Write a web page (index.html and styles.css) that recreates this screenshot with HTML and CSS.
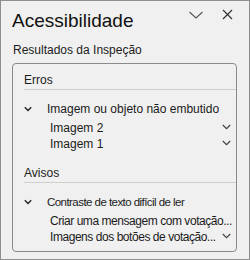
FILE: index.html
```html
<!DOCTYPE html>
<html lang="pt">
<head>
<meta charset="utf-8">
<link rel="stylesheet" href="styles.css">
</head>
<body>
<div class="pane">
  <div class="header">
    <h1 class="title">Acessibilidade</h1>
    <div class="actions">
      <svg class="icon" width="16" height="8" viewBox="0 0 16 8"><path d="M1.5 1 L8 7 L14.5 1" fill="none" stroke="#555" stroke-width="1.1"/></svg>
      <svg class="icon" width="11" height="11" viewBox="0 0 11 11"><path d="M1 1 L10 10 M10 1 L1 10" fill="none" stroke="#333" stroke-width="1.2"/></svg>
    </div>
  </div>
  <div class="subtitle">Resultados da Inspeção</div>
  <div class="box">
    <div class="section">Erros</div>
    <div class="issue">
      <svg class="chev" width="8" height="6" viewBox="0 0 8 6"><path d="M0.8 1.2 L4 4.4 L7.2 1.2" fill="none" stroke="#222" stroke-width="1.4"/></svg>
      <span>Imagem ou objeto não embutido</span>
    </div>
    <div class="item"><span>Imagem 2</span><svg class="chev-r" width="9" height="6" viewBox="0 0 9 6"><path d="M0.8 1 L4.5 4.6 L8.2 1" fill="none" stroke="#444" stroke-width="1.2"/></svg></div>
    <div class="item"><span>Imagem 1</span><svg class="chev-r" width="9" height="6" viewBox="0 0 9 6"><path d="M0.8 1 L4.5 4.6 L8.2 1" fill="none" stroke="#444" stroke-width="1.2"/></svg></div>
    <div class="section warn">Avisos</div>
    <div class="issue">
      <svg class="chev" width="8" height="6" viewBox="0 0 8 6"><path d="M0.8 1.2 L4 4.4 L7.2 1.2" fill="none" stroke="#222" stroke-width="1.4"/></svg>
      <span class="tight">Contraste de texto difícil de ler</span>
    </div>
    <div class="item"><span class="snug">Criar uma mensagem com votação...</span></div>
    <div class="item"><span class="snug">Imagens dos botões de votação...</span><svg class="chev-r" width="9" height="6" viewBox="0 0 9 6"><path d="M0.8 1 L4.5 4.6 L8.2 1" fill="none" stroke="#444" stroke-width="1.2"/></svg></div>
  </div>
</div>
</body>
</html>
```
FILE: styles.css
```css
* { box-sizing: border-box; }
html, body { margin: 0; padding: 0; }
body {
  font-family: "Liberation Sans", Arial, sans-serif;
  color: #1b1b1b;
  background: #f0f0f0;
}
.pane {
  width: 250px;
  height: 260px;
  border: 1px solid #8e8e8e;
  background: #f0f0f0;
  padding: 0 0 0 11px;
  overflow: hidden;
}
.header {
  display: flex;
  align-items: flex-start;
  justify-content: space-between;
  height: 42px;
  padding-top: 8px;
}
.title {
  margin: 0;
  font-size: 19px;
  font-weight: normal;
  line-height: 24px;
  color: #111;
}
.actions {
  display: flex;
  align-items: center;
  gap: 18px;
  padding: 0 16px 0 0;
}
.subtitle {
  font-size: 12px;
  line-height: 14px;
  padding-left: 1px;
  margin-bottom: 6px;
  white-space: nowrap;
}
.box {
  width: 225px;
  height: 189px;
  border: 1px solid #8a8a8a;
  border-radius: 4px;
  padding: 5px 0 0 11px;
}
.section {
  font-size: 12px;
  line-height: 14px;
  width: 212px;
  padding: 4px 0 2px 0;
  border-bottom: 1px solid #cfcfcf;
}
.section.warn { margin-top: 10px; }
.issue {
  display: flex;
  align-items: center;
  font-size: 12px;
  line-height: 16px;
  margin-top: 11px;
  margin-bottom: 3px;
  white-space: nowrap;
}
.chev { margin-right: 15px; flex: none; }
.item {
  display: flex;
  align-items: center;
  justify-content: space-between;
  font-size: 12px;
  line-height: 16px;
  width: 207px;
  padding-left: 26px;
  white-space: nowrap;
}
.chev-r { flex: none; margin-top: -3px; }
.tight { font-size: 11.5px; letter-spacing: -0.55px; }
.snug { letter-spacing: -0.45px; }
```
